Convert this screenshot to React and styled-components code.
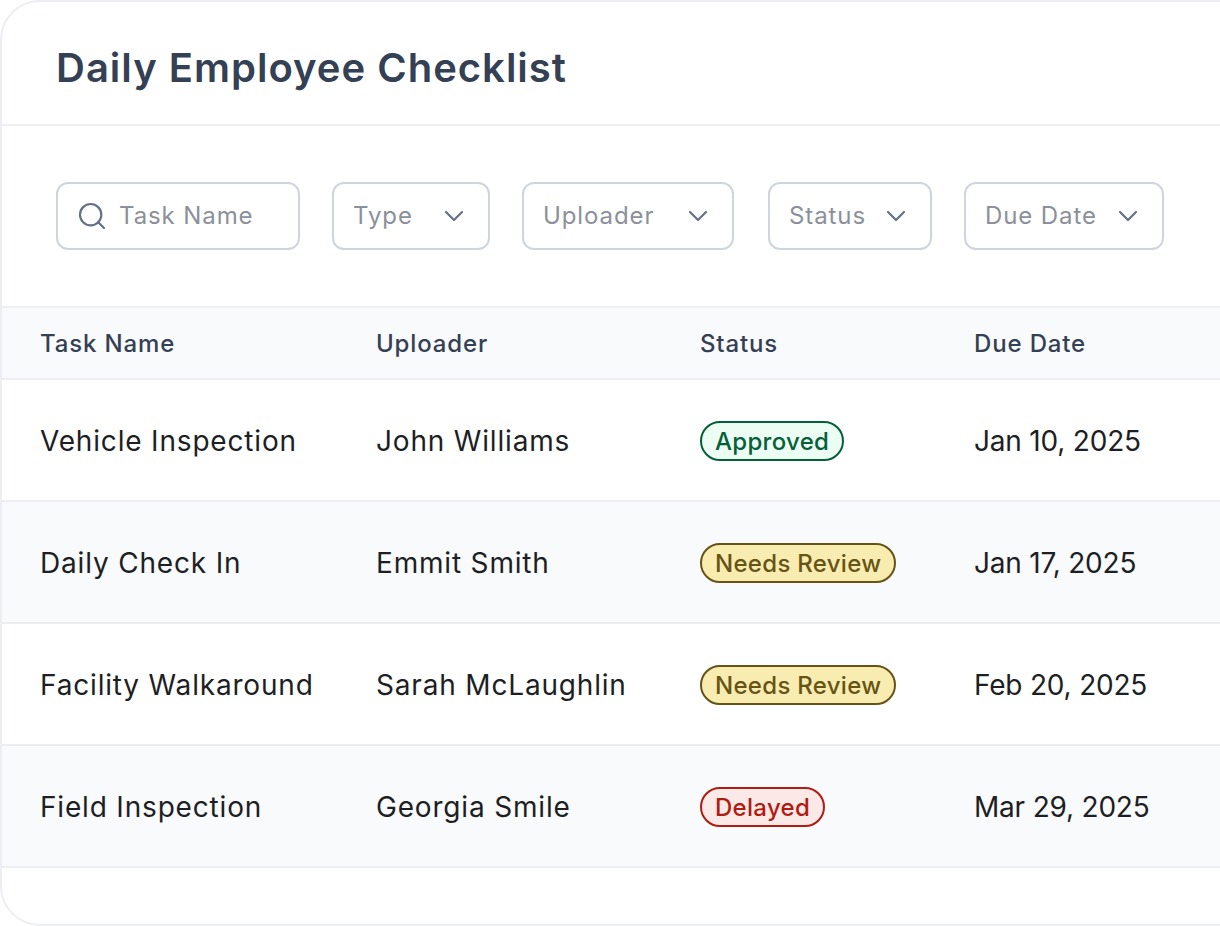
import React from 'react'
import styled, { createGlobalStyle } from 'styled-components'
import { Search, ChevronDown } from 'lucide-react'

const GlobalStyle = createGlobalStyle`
  html, body {
    margin: 0;
    background: #ffffff;
    overflow: hidden;
    font-family: "Inter", "Liberation Sans", sans-serif;
  }
`

const filters = [
  { label: 'Type', width: 158 },
  { label: 'Uploader', width: 212 },
  { label: 'Status', width: 164, gap: 34 },
  { label: 'Due Date', width: 200 },
]

const rows = [
  { task: 'Vehicle Inspection', uploader: 'John Williams', status: 'Approved', due: 'Jan 10, 2025' },
  { task: 'Daily Check In', uploader: 'Emmit Smith', status: 'Needs Review', due: 'Jan 17, 2025' },
  { task: 'Facility Walkaround', uploader: 'Sarah McLaughlin', status: 'Needs Review', due: 'Feb 20, 2025' },
  { task: 'Field Inspection', uploader: 'Georgia Smile', status: 'Delayed', due: 'Mar 29, 2025' },
]

const statusColors = {
  Approved: { bg: '#ecfdf3', fg: '#05603a' },
  'Needs Review': { bg: '#f9ecb0', fg: '#665415' },
  Delayed: { bg: '#fbe9e7', fg: '#b01b12' },
}

export default function App() {
  return (
    <>
      <GlobalStyle />
      <Card>
        <Header>
          <Title>Daily Employee Checklist</Title>
        </Header>
        <Filters>
          <Field $width={244}>
            <Search size={32} strokeWidth={1.6} color="#667085" />
            <Placeholder>Task Name</Placeholder>
          </Field>
          {filters.map((f) => (
            <SelectField key={f.label} $width={f.width} $gap={f.gap}>
              <Placeholder>{f.label}</Placeholder>
              <ChevronDown size={32} strokeWidth={1.6} color="#667085" />
            </SelectField>
          ))}
        </Filters>
        <HeadRow>
          <HeadCell>Task Name</HeadCell>
          <HeadCell>Uploader</HeadCell>
          <HeadCell>Status</HeadCell>
          <HeadCell>Due Date</HeadCell>
        </HeadRow>
        {rows.map((r, i) => (
          <Row key={r.task} $striped={i % 2 === 1}>
            <Cell>{r.task}</Cell>
            <Cell>{r.uploader}</Cell>
            <div>
              <Badge $status={r.status}>{r.status}</Badge>
            </div>
            <DateCell>{r.due}</DateCell>
          </Row>
        ))}
      </Card>
    </>
  )
}

const Card = styled.div`
  box-sizing: border-box;
  width: 1260px;
  height: 926px;
  background: #ffffff;
  border: 2px solid #eceef2;
  border-radius: 40px;
  overflow: hidden;
`

const Header = styled.div`
  box-sizing: border-box;
  height: 124px;
  padding: 8px 0 0 54px;
  display: flex;
  align-items: center;
  border-bottom: 2px solid #eceef2;
`

const Title = styled.h1`
  margin: 0;
  font-size: 40px;
  font-weight: 600;
  letter-spacing: 1px;
  color: #344054;
`

const Filters = styled.div`
  box-sizing: border-box;
  height: 180px;
  padding: 0 0 0 54px;
  display: flex;
  align-items: center;
`

const Field = styled.div`
  box-sizing: border-box;
  width: ${(p) => p.$width}px;
  height: 68px;
  margin-left: ${(p) => p.$gap || 0}px;
  padding: 0 18px;
  display: flex;
  align-items: center;
  gap: 11px;
  border: 2px solid #d0d5dd;
  border-radius: 12px;
  background: #ffffff;
`

const SelectField = styled(Field)`
  margin-left: ${(p) => p.$gap || 32}px;
  padding: 0 18px 0 19px;
  justify-content: space-between;
  gap: 0;
`

const Placeholder = styled.span`
  margin-top: -2px;
  font-size: 24px;
  letter-spacing: 0.9px;
  color: #8b909a;
`

const columns = `
  display: grid;
  grid-template-columns: 336px 324px 274px 1fr;
  align-items: center;
  box-sizing: border-box;
  padding-left: 38px;
`

const HeadRow = styled.div`
  ${columns}
  height: 74px;
  background: #f9fafc;
  border-top: 2px solid #eceef2;
  border-bottom: 2px solid #eceef2;
`

const HeadCell = styled.div`
  font-size: 24px;
  font-weight: 500;
  letter-spacing: 0.85px;
  color: #344054;
`

const Row = styled.div`
  ${columns}
  height: 122px;
  padding-top: 2px;
  background: ${(p) => (p.$striped ? '#f9fafc' : '#ffffff')};
  border-bottom: 2px solid #eceef2;
`

const Cell = styled.div`
  font-size: 28px;
  letter-spacing: 0.82px;
  color: #1d1f24;
`

const DateCell = styled(Cell)`
  letter-spacing: -0.2px;
`

const Badge = styled.span`
  display: inline-flex;
  align-items: center;
  box-sizing: border-box;
  height: 40px;
  padding: 0 13px;
  font-size: 24px;
  font-weight: 500;
  letter-spacing: 0.3px;
  border-radius: 20px;
  color: ${(p) => statusColors[p.$status].fg};
  background: ${(p) => statusColors[p.$status].bg};
  border: 2px solid ${(p) => statusColors[p.$status].fg};
`
